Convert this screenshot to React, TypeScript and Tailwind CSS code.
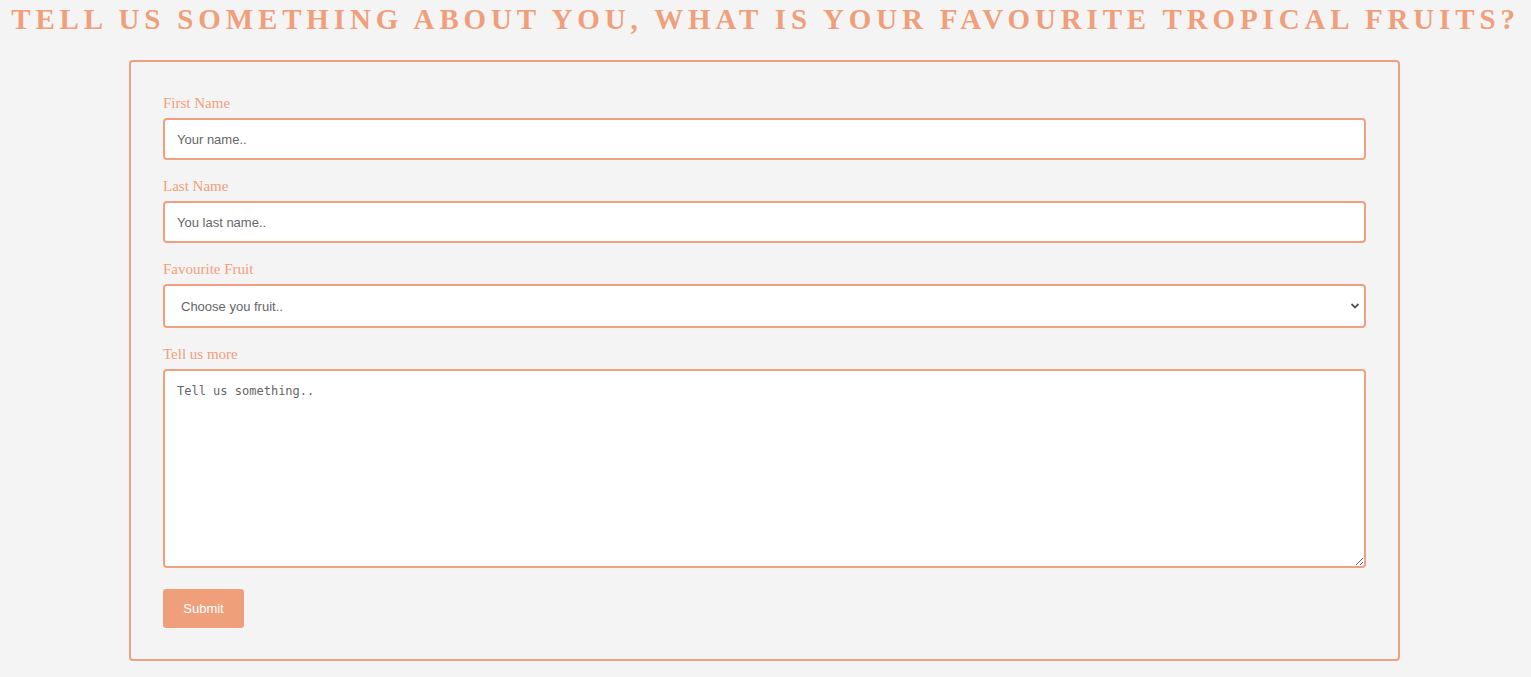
export default function App() {
  return (
    <div className="min-h-screen bg-[#f4f4f4] pb-4">
      <h1 className="text-center font-['Liberation_Serif',serif] font-bold uppercase text-[#f09f7b] text-[29px] leading-[38px] tracking-[4.85px] whitespace-nowrap">
        Tell us something about you, what is your favourite tropical fruits?
      </h1>
      <form
        className="w-[1271px] ml-[129px] mt-[22px] border-2 border-[#eea080] rounded-[4px] px-[32px] pt-[32px] pb-[31px] font-['Liberation_Sans',Arial,sans-serif]"
        onSubmit={(e) => e.preventDefault()}
      >
        <label className="block h-[18px] leading-[18px] mb-[6px] text-[15px] text-[#f09f7b] font-['Liberation_Serif',serif]">
          First Name
        </label>
        <input
          type="text"
          placeholder="Your name.."
          className="block w-full h-[42px] mb-[17px] px-[12px] bg-white border-2 border-[#eea080] rounded-[4px] text-[13px] text-[#333] placeholder:text-[#666] outline-none"
        />
        <label className="block h-[18px] leading-[18px] mb-[6px] text-[15px] text-[#f09f7b] font-['Liberation_Serif',serif]">
          Last Name
        </label>
        <input
          type="text"
          placeholder="You last name.."
          className="block w-full h-[42px] mb-[17px] px-[12px] bg-white border-2 border-[#eea080] rounded-[4px] text-[13px] text-[#333] placeholder:text-[#666] outline-none"
        />
        <label className="block h-[18px] leading-[18px] mb-[6px] text-[15px] text-[#f09f7b] font-['Liberation_Serif',serif]">
          Favourite Fruit
        </label>
        <div className="relative mb-[17px]">
          <select
            defaultValue=""
            className="block w-full h-[44px] pl-[16px] pr-[30px] pt-[2px] appearance-none bg-white border-2 border-[#eea080] rounded-[4px] text-[13px] text-[#666] outline-none"
          >
            <option value="">Choose you fruit..</option>
            <option value="mango">Mango</option>
            <option value="pineapple">Pineapple</option>
            <option value="papaya">Papaya</option>
          </select>
          <svg
            className="absolute right-[6px] top-[18px] pointer-events-none"
            width="10"
            height="8"
            viewBox="0 0 10 8"
          >
            <path d="M1.5 2 L5 5.5 L8.5 2" fill="none" stroke="#555" strokeWidth="1.8" />
          </svg>
        </div>
        <label className="block h-[18px] leading-[18px] mb-[6px] text-[15px] text-[#f09f7b] font-['Liberation_Serif',serif]">
          Tell us more
        </label>
        <textarea
          placeholder="Tell us something.."
          className="block w-full h-[199px] mb-[21px] px-[12px] py-[12px] bg-white border-2 border-[#eea080] rounded-[4px] text-[12px] leading-[16px] font-['DejaVu_Sans_Mono',monospace] text-[#333] placeholder:text-[#666] outline-none resize-y"
        />
        <button
          type="submit"
          className="block w-[81px] h-[39px] bg-[#f09f7b] rounded-[3px] text-white text-[13px]"
        >
          Submit
        </button>
      </form>
    </div>
  );
}
